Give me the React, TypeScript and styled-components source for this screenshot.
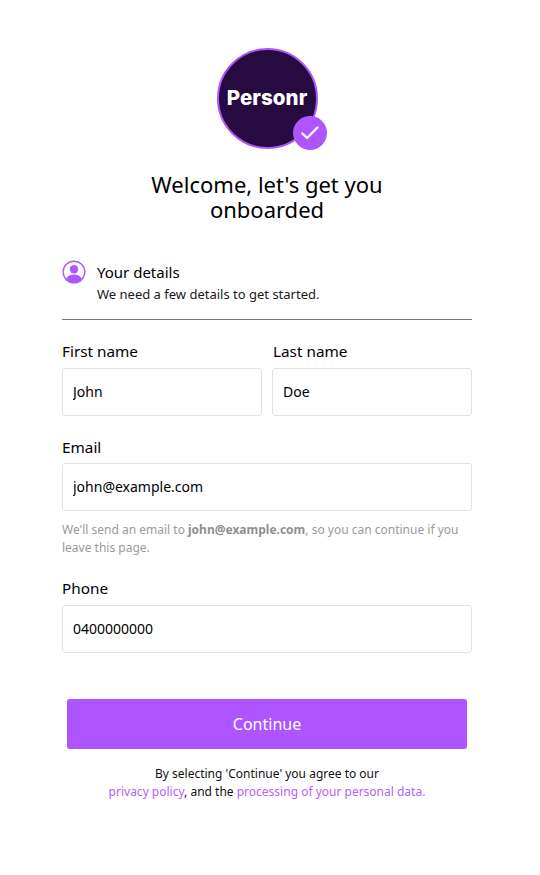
import React from "react";
import styled, { createGlobalStyle } from "styled-components";

const Global = createGlobalStyle`
  html, body { margin: 0; padding: 0; background: #fff; }
  body { font-family: "Noto Sans", sans-serif; color: #000; }
  * { box-sizing: border-box; }
`;

const Page = styled.div`
  width: 540px;
  height: 875px;
  padding: 48px 68px 0 62px;
  display: flex;
  flex-direction: column;
  overflow: hidden;
`;

const LogoWrap = styled.div`
  position: relative;
  align-self: center;
  width: 101px;
  height: 101px;
`;

const LogoCircle = styled.div`
  width: 101px;
  height: 101px;
  border-radius: 50%;
  background: #270a40;
  border: 2px solid #ae55ff;
  display: flex;
  align-items: center;
  justify-content: center;
  padding: 0 0 1px 0;
`;

const LogoText = styled.span`
  font-family: Inter, sans-serif;
  font-weight: 800;
  font-size: 20.5px;
  line-height: 24px;
  letter-spacing: 0.08px;
  color: #fff;
`;

const Badge = styled.div`
  position: absolute;
  left: 76px;
  top: 68px;
  width: 34px;
  height: 34px;
  border-radius: 50%;
  background: #ae55ff;
  display: flex;
  align-items: center;
  justify-content: center;
`;

const Title = styled.h1`
  margin: 23px 0 0;
  font-size: 22px;
  line-height: 25px;
  font-weight: 400;
  text-align: center;
  color: #000;
`;

const Section = styled.div`
  display: flex;
  gap: 11px;
  margin-top: 40px;
  padding-bottom: 14px;
  border-bottom: 1px solid #7d7488;
`;

const SectionIcon = styled.div`
  width: 24px;
  height: 24px;
  flex: none;
  margin-top: -2px;
`;

const SectionText = styled.div`
  display: flex;
  flex-direction: column;
`;

const SectionTitle = styled.div`
  font-size: 15px;
  line-height: 20px;
`;

const SectionSub = styled.div`
  font-size: 13px;
  line-height: 20px;
  margin-top: 2px;
  margin-bottom: 1px;
  color: #1a1a1a;
`;

const Row = styled.div`
  display: grid;
  grid-template-columns: 200px 200px;
  column-gap: 10px;
  margin-top: 21px;
`;

const Field = styled.div<{ $top?: number }>`
  display: flex;
  flex-direction: column;
  margin-top: ${(p) => p.$top ?? 0}px;
`;

const Label = styled.label<{ $gap?: number; $indent?: number }>`
  font-size: 15.3px;
  line-height: 20px;
  margin-bottom: ${(p) => p.$gap ?? 7}px;
  padding-left: ${(p) => p.$indent ?? 0}px;
  color: #000;
`;

const Input = styled.input`
  width: 100%;
  height: 48px;
  border: 1px solid #e2e2e2;
  border-radius: 3px;
  padding: 0 10px 1px;
  font-family: "Noto Sans", sans-serif;
  font-size: 14px;
  color: #000;
  background: #fff;
  outline: none;
`;

const Hint = styled.p`
  margin: 10px 0 0;
  font-size: 12px;
  line-height: 18px;
  color: #9a9a9a;
  b { font-weight: 700; color: #8f8f8f; }
`;

const Button = styled.button`
  display: block;
  width: 400px;
  height: 50px;
  margin: 46px 0 0 5px;
  border: none;
  border-radius: 3px;
  background: #ae55ff;
  color: #fff;
  font-family: "Noto Sans", sans-serif;
  font-size: 16px;
`;

const Terms = styled.p`
  margin: 16px 0 0;
  font-size: 12px;
  line-height: 18px;
  text-align: center;
  color: #111;
`;

const TermsLink = styled.a`
  color: #b362f5;
  text-decoration: none;
`;

export default function App() {
  return (
    <Page>
      <Global />
      <LogoWrap>
        <LogoCircle>
          <LogoText>Personr</LogoText>
        </LogoCircle>
        <Badge>
          <svg width="20" height="20" viewBox="0 0 20 20" fill="none">
            <path d="M2.5 10.5 L7 15 L17.5 4.5" stroke="#fff" strokeWidth="2.4" strokeLinecap="round" strokeLinejoin="round" />
          </svg>
        </Badge>
      </LogoWrap>
      <Title>
        Welcome, let's get you
        <br />
        onboarded
      </Title>
      <Section>
        <SectionIcon>
          <svg width="24" height="24" viewBox="0 0 24 24" fill="none">
            <circle cx="12" cy="12" r="10.8" stroke="#ae55ff" strokeWidth="1.4" />
            <circle cx="12" cy="9.3" r="4.2" fill="#ae55ff" />
            <path d="M4 19c1.5-3.4 4.4-4.6 8-4.6s6.5 1.2 8 4.6c-2 2.4-4.8 4-8 4s-6-1.6-8-4z" fill="#ae55ff" />
          </svg>
        </SectionIcon>
        <SectionText>
          <SectionTitle>Your details</SectionTitle>
          <SectionSub>We need a few details to get started.</SectionSub>
        </SectionText>
      </Section>
      <Row>
        <Field>
          <Label>First name</Label>
          <Input readOnly value="John" />
        </Field>
        <Field>
          <Label $indent={1}>Last name</Label>
          <Input readOnly value="Doe" />
        </Field>
      </Row>
      <Field $top={21}>
        <Label $gap={6}>Email</Label>
        <Input readOnly value="john@example.com" />
      </Field>
      <Hint>
        We'll send an email to <b>john@example.com</b>, so you can continue if you leave this page.
      </Hint>
      <Field $top={21}>
        <Label>Phone</Label>
        <Input readOnly value="0400000000" />
      </Field>
      <Button>Continue</Button>
      <Terms>
        By selecting 'Continue' you agree to our
        <br />
        <TermsLink>privacy policy</TermsLink>, and the <TermsLink>processing of your personal data.</TermsLink>
      </Terms>
    </Page>
  );
}
